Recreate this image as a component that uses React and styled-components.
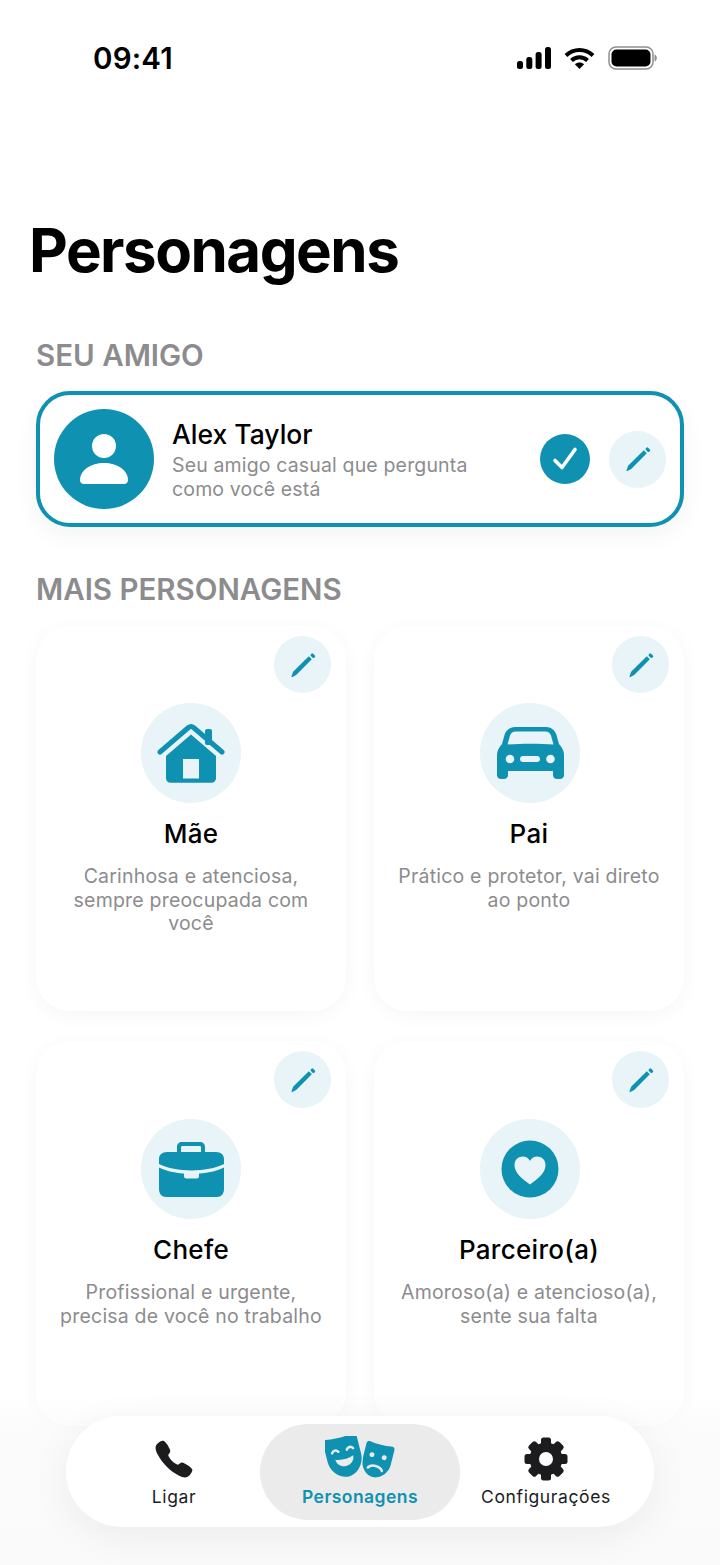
import React from "react";
import styled, { createGlobalStyle } from "styled-components";
import { IoCall } from "react-icons/io5";

const TEAL = "#0f91b1";
const TINT = "#e8f4f7";
const GREY = "#8c8c8e";

const GlobalStyle = createGlobalStyle`
  html, body {
    margin: 0;
    padding: 0;
    background: #ffffff;
  }
  * {
    box-sizing: border-box;
  }
`;

const Screen = styled.div`
  position: relative;
  width: 720px;
  height: 1565px;
  overflow: hidden;
  background: #ffffff;
  font-family: Inter, "Liberation Sans", sans-serif;
`;

const StatusBar = styled.div`
  display: flex;
  align-items: center;
  justify-content: space-between;
  height: 44px;
  margin-top: 36px;
  padding: 0 63px 0 93px;
`;

const Clock = styled.span`
  font-size: 29.5px;
  font-weight: 600;
  letter-spacing: 0.2px;
  color: #000000;
`;

const StatusIcons = styled.div`
  display: flex;
  align-items: center;
  gap: 13px;
`;

const Title = styled.h1`
  margin: 134px 0 0 29px;
  font-size: 60px;
  line-height: 72px;
  font-weight: 700;
  letter-spacing: -1.5px;
  color: #000000;
`;

const SectionLabel = styled.h2`
  margin: ${(p) => p.$top}px 0 0 36px;
  font-size: 29.5px;
  line-height: 36px;
  font-weight: 600;
  color: ${GREY};
`;

const FriendCard = styled.div`
  display: flex;
  align-items: center;
  height: 136px;
  margin: 18px 36px 0;
  padding: 0 14px;
  border: 4px solid ${TEAL};
  border-radius: 34px;
  background: #ffffff;
  box-shadow: 0 8px 24px rgba(0, 0, 0, 0.05);
`;

const Avatar = styled.div`
  flex: none;
  display: flex;
  align-items: center;
  justify-content: center;
  width: 100px;
  height: 100px;
  margin-left: ${(p) => (p.$nudge ? 2 : 0)}px;
  border-radius: 50%;
  background: ${(p) => (p.$solid ? TEAL : TINT)};
`;

const FriendText = styled.div`
  flex: 1;
  margin-left: 18px;
`;

const Name = styled.div`
  font-size: 26.5px;
  line-height: 34px;
  font-weight: 500;
  color: #000000;
`;

const Description = styled.div`
  margin-top: 3px;
  font-size: 19.5px;
  line-height: 23.5px;
  letter-spacing: 0.15px;
  color: ${GREY};
`;

const CheckBadge = styled.div`
  flex: none;
  display: flex;
  align-items: center;
  justify-content: center;
  width: 50px;
  height: 50px;
  margin-right: 19px;
  border-radius: 50%;
  background: ${TEAL};
`;

const EditButton = styled.div`
  flex: none;
  display: flex;
  align-items: center;
  justify-content: center;
  width: 57px;
  height: 57px;
  border-radius: 50%;
  background: ${TINT};
`;

const CornerEdit = styled(EditButton)`
  position: absolute;
  top: 10px;
  right: 15px;
`;

const Grid = styled.div`
  display: grid;
  grid-template-columns: 310px 310px;
  grid-auto-rows: 385px;
  column-gap: 28px;
  row-gap: 30px;
  margin: 19px 36px 0;
`;

const Card = styled.div`
  position: relative;
  display: flex;
  flex-direction: column;
  align-items: center;
  padding-top: ${(p) => (p.$lower ? 78 : 77)}px;
  border-radius: 34px;
  background: #ffffff;
  box-shadow: 0 4px 20px rgba(0, 0, 0, 0.04);
  text-align: center;
`;

const CardName = styled.div`
  margin-top: 14px;
  font-size: 26px;
  line-height: 34px;
  font-weight: 500;
  letter-spacing: 0.3px;
  color: #000000;
`;

const CardDescription = styled.div`
  margin-top: 14px;
  padding: 0 20px;
  font-size: 19.5px;
  line-height: 23.5px;
  letter-spacing: 0.2px;
  color: ${GREY};
`;

const BottomFade = styled.div`
  position: absolute;
  left: 0;
  right: 0;
  bottom: 0;
  height: 170px;
  background: linear-gradient(to bottom, rgba(255, 255, 255, 0), rgba(250, 250, 250, 0.95) 30%, #fafafa);
`;

const TabBar = styled.nav`
  position: absolute;
  left: 66px;
  top: 1416px;
  display: grid;
  grid-template-columns: 172px 200px 172px;
  align-items: center;
  width: 588px;
  height: 111px;
  padding: 0 22px;
  border-radius: 56px;
  background: #ffffff;
  box-shadow: 0 10px 40px rgba(0, 0, 0, 0.06);
`;

const Tab = styled.div`
  display: flex;
  flex-direction: column;
  align-items: center;
  height: 96px;
  padding-top: 12px;
  border-radius: 48px;
  background: ${(p) => (p.$active ? "#ebebeb" : "transparent")};
  color: ${(p) => (p.$active ? TEAL : "#1c1c1e")};
`;

const TabIcon = styled.div`
  display: flex;
  align-items: center;
  justify-content: center;
  height: 46px;
`;

const TabLabel = styled.span`
  margin-top: 3px;
  font-size: 17.5px;
  line-height: 24px;
  font-weight: ${(p) => (p.$active ? 600 : 400)};
  letter-spacing: ${(p) => (p.$active ? "0.45px" : "0.62px")};
  white-space: nowrap;
`;

const CellularIcon = () => (
  <svg width="34" height="22" viewBox="0 0 34 22" fill="#000">
    <rect x="0" y="14" width="6" height="8" rx="2.5" />
    <rect x="9.300" y="10" width="6" height="12" rx="2.5" />
    <rect x="18.600" y="5" width="6" height="17" rx="2.5" />
    <rect x="28" y="0" width="6" height="22" rx="2.5" />
  </svg>
);

const WifiIcon = () => (
  <svg width="31" height="22" viewBox="0 0 31 22" fill="none" stroke="#000" strokeWidth="4">
    <path d="M2 8.500C9.500 1 21.500 1 29 8.500" />
    <path d="M7.500 13.500C12 9.200 19 9.200 23.500 13.500" />
    <path d="M15.500 22l-4.600-4.800c2.600-2.200 6.600-2.200 9.200 0z" fill="#000" stroke="none" />
  </svg>
);

const BatteryIcon = () => (
  <svg width="49" height="24" viewBox="0 0 49 24">
    <rect x="1" y="1" width="44" height="22" rx="7" fill="none" stroke="#8f8f8f" strokeWidth="1.500" />
    <rect x="3.500" y="3.500" width="39" height="17" rx="5" fill="#000" />
    <path d="M46.500 8.500c1.600.6 2.300 2 2.300 3.500s-.7 2.900-2.300 3.500z" fill="#8f8f8f" />
  </svg>
);

const PencilIcon = () => (
  <svg width="30" height="30" viewBox="0 0 30 30" fill={TEAL}>
    <path d="M3.500 26.500l1.600-4.800L20.800 6.200l3 3L8.200 24.900l-3.900 2.200c-.5.200-.9-.1-.8-.6z" />
    <rect x="22.500" y="4.100" width="4.800" height="3.200" rx="1.200" transform="rotate(45 24.900 5.700)" />
  </svg>
);

const CheckIcon = () => (
  <svg width="30" height="30" viewBox="0 0 30 30" fill="none" stroke="#fff" strokeWidth="3.600" strokeLinecap="round" strokeLinejoin="round">
    <path d="M5 16.500l7 7L25 5.500" />
  </svg>
);

const PersonIcon = () => (
  <svg width="48" height="50" viewBox="0 0 48 50" fill="#fff">
    <circle cx="24" cy="12" r="12" />
    <path d="M0 46C0 36 11 29 24 29s24 7 24 17c0 2.500-1.500 4-4 4H4c-2.500 0-4-1.500-4-4z" />
  </svg>
);

const HouseIcon = () => (
  <svg width="68" height="60" viewBox="0 0 68 60" fill={TEAL}>
    <path
      d="M3 29L31.500 4.500Q34 2.600 36.500 4.500L65 29"
      fill="none"
      stroke={TEAL}
      strokeWidth="5"
      strokeLinecap="round"
      strokeLinejoin="round"
    />
    <rect x="48" y="6" width="7" height="16" rx="2" />
    <path
      fillRule="evenodd"
      d="M34 11.500L59 33V55c0 2.800-2 4.800-4.800 4.800H13.800C11 59.800 9 57.800 9 55V33zM26 36v19.500h16V36z"
    />
  </svg>
);

const CarIcon = () => (
  <svg width="67" height="52" viewBox="0 0 67 52" fill={TEAL}>
    <path
      fillRule="evenodd"
      d="M18 0H49C54 0 58 3 59.500 8L62 17C65 20 67 24 67 28V48C67 50.500 65 52 63 52H60C58 52 56 50.500 56 48V44H11V48C11 50.500 9 52 7 52H4C2 52 0 50.500 0 48V28C0 24 2 20 5 17L7.500 8C9 3 13 0 18 0ZM18.500 4.500C16 4.500 14 6 13 8.500L10.500 17.500C25 16.500 42 16.500 56.500 17.500L54 8.500C53 6 51 4.500 48.500 4.500ZM13 27.700a4.300 4.300 0 1 0 0 8.600 4.300 4.300 0 0 0 0-8.600ZM53.500 27.700a4.300 4.300 0 1 0 0 8.600 4.300 4.300 0 0 0 0-8.600ZM26 29c-1.700 0-3 1.300-3 3s1.300 3 3 3h14c1.700 0 3-1.300 3-3s-1.300-3-3-3Z"
    />
  </svg>
);

const BriefcaseIcon = () => (
  <svg width="65" height="55" viewBox="0 0 65 55" fill={TEAL}>
    <path
      fillRule="evenodd"
      d="M23 0H41C44 0 46 2 46 5V10H57C62 10 65 13 65 17V22C48 30.500 17 30.500 0 22V17C0 13 3 10 8 10H18V5C18 2 20 0 23 0ZM23.500 4C22.500 4 22 4.500 22 5.500V10H42V5.500C42 4.500 41.500 4 40.500 4Z"
    />
    <path d="M0 25.500C17 34 48 34 65 25.500V47C65 52 62 55 58 55H7C3 55 0 52 0 47Z" />
    <rect x="25" y="29" width="15" height="7.500" rx="2.500" fill={TINT} />
  </svg>
);

const HeartCircleIcon = () => (
  <svg width="58" height="58" viewBox="0 0 58 58">
    <circle cx="29" cy="29" r="28.500" fill={TEAL} />
    <path
      d="M29 44.500C22 39.500 13.500 33.500 13.500 25c0-5 3.700-8.500 8.200-8.500 3 0 5.700 1.500 7.300 4.200 1.600-2.700 4.300-4.200 7.300-4.200 4.500 0 8.200 3.500 8.200 8.500 0 8.500-8.500 14.500-15.500 19.500z"
      fill={TINT}
    />
  </svg>
);

const MASK_SHAPE = "M0 3C0 1 1.500 0 3 0C12 1.500 20 1.500 29 0C30.500 0 32 1 32 3V20C32 30 24 38 16 38C8 38 0 30 0 20Z";

const MasksIcon = () => (
  <svg width="70" height="46" viewBox="0 0 70 46">
    <g transform="translate(52 24.500) rotate(14) scale(0.9) translate(-16 -19)">
      <path fill={TEAL} d={MASK_SHAPE} />
      <circle cx="9" cy="14" r="2.700" fill="#ebebeb" />
      <circle cx="23" cy="14" r="2.700" fill="#ebebeb" />
      <path d="M8 29C11 24 21 24 24 29" fill="none" stroke="#ebebeb" strokeWidth="2.800" strokeLinecap="round" />
    </g>
    <g transform="translate(19 20.500) rotate(-14) scale(1.08) translate(-16 -19)">
      <path fill={TEAL} stroke="#ebebeb" strokeWidth="2" paintOrder="stroke" d={MASK_SHAPE} />
      <path d="M6 13.500C7.500 11 10.500 11 12 13.500M20 13.500C21.500 11 24.500 11 26 13.500" fill="none" stroke="#ebebeb" strokeWidth="2.300" strokeLinecap="round" />
      <path d="M7.500 20C12.500 22 19.500 22 24.500 20C24.500 25 20.500 28 16 28C11.500 28 7.500 25 7.500 20Z" fill="#ebebeb" />
    </g>
  </svg>
);

const GearIcon = () => (
  <svg width="44" height="44" viewBox="-22 -22 44 44" fill="#1c1c1e">
    {[0, 45, 90, 135, 180, 225, 270, 315].map((a) => (
      <rect key={a} x="-5" y="-21.500" width="10" height="10" rx="2.500" transform={`rotate(${a})`} />
    ))}
    <path fillRule="evenodd" d="M0-16.500a16.500 16.500 0 1 0 0 33 16.500 16.500 0 0 0 0-33zM0-7a7 7 0 1 1 0 14A7 7 0 0 1 0-7z" />
  </svg>
);

const characters = [
  { name: "Mãe", text: "Carinhosa e atenciosa, sempre preocupada com você", icon: <HouseIcon /> },
  { name: "Pai", text: "Prático e protetor, vai direto ao ponto", icon: <CarIcon /> },
  { name: "Chefe", text: "Profissional e urgente, precisa de você no trabalho", icon: <BriefcaseIcon /> },
  { name: "Parceiro(a)", text: "Amoroso(a) e atencioso(a), sente sua falta", icon: <HeartCircleIcon /> },
];

export default function App() {
  return (
    <Screen>
      <GlobalStyle />
      <StatusBar>
        <Clock>09:41</Clock>
        <StatusIcons>
          <CellularIcon />
          <WifiIcon />
          <BatteryIcon />
        </StatusIcons>
      </StatusBar>
      <Title>Personagens</Title>
      <SectionLabel $top={51}>SEU AMIGO</SectionLabel>
      <FriendCard>
        <Avatar $solid>
          <PersonIcon />
        </Avatar>
        <FriendText>
          <Name>Alex Taylor</Name>
          <Description>
            Seu amigo casual que pergunta
            <br />
            como você está
          </Description>
        </FriendText>
        <CheckBadge>
          <CheckIcon />
        </CheckBadge>
        <EditButton>
          <PencilIcon />
        </EditButton>
      </FriendCard>
      <SectionLabel $top={44}>MAIS PERSONAGENS</SectionLabel>
      <Grid>
        {characters.map((c, i) => (
          <Card key={c.name} $lower={i > 1}>
            <CornerEdit>
              <PencilIcon />
            </CornerEdit>
            <Avatar $nudge={i % 2 === 1}>{c.icon}</Avatar>
            <CardName>{c.name}</CardName>
            <CardDescription>{c.text}</CardDescription>
          </Card>
        ))}
      </Grid>
      <BottomFade />
      <TabBar>
        <Tab>
          <TabIcon>
            <IoCall size={42} />
          </TabIcon>
          <TabLabel>Ligar</TabLabel>
        </Tab>
        <Tab $active>
          <TabIcon>
            <MasksIcon />
          </TabIcon>
          <TabLabel $active>Personagens</TabLabel>
        </Tab>
        <Tab>
          <TabIcon>
            <GearIcon />
          </TabIcon>
          <TabLabel>Configurações</TabLabel>
        </Tab>
      </TabBar>
    </Screen>
  );
}
